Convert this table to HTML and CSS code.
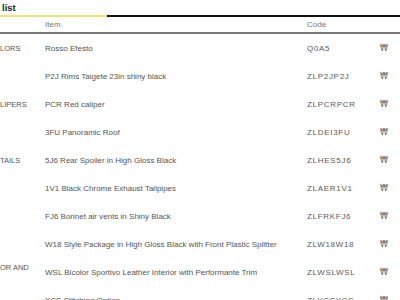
FILE: index.html
```html
<!DOCTYPE html>
<html>
<head>
<meta charset="utf-8">
<link rel="stylesheet" href="styles.css">
</head>
<body>
<div class="page">
  <div class="title">list</div>
  <div class="bar"><div class="bar-yellow"></div><div class="bar-black"></div></div>
  <div class="head">
    <div class="c-cat"></div>
    <div class="c-item">Item</div>
    <div class="c-code">Code</div>
    <div class="c-price"></div>
  </div>
  <div class="rows">
    <div class="row"><div class="c-cat">LORS</div><div class="c-item">Rosso Efesto</div><div class="c-code">Q0A5</div><div class="c-price">₩</div></div>
    <div class="row"><div class="c-cat"></div><div class="c-item">P2J Rims Taigete 23in shiny black</div><div class="c-code">ZLP2JP2J</div><div class="c-price">₩</div></div>
    <div class="row"><div class="c-cat">LIPERS</div><div class="c-item">PCR Red caliper</div><div class="c-code">ZLPCRPCR</div><div class="c-price">₩</div></div>
    <div class="row"><div class="c-cat"></div><div class="c-item">3FU Panoramic Roof</div><div class="c-code">ZLDEI3FU</div><div class="c-price">₩</div></div>
    <div class="row"><div class="c-cat">TAILS</div><div class="c-item">5J6 Rear Spoiler in High Gloss Black</div><div class="c-code">ZLHES5J6</div><div class="c-price">₩</div></div>
    <div class="row"><div class="c-cat"></div><div class="c-item">1V1 Black Chrome Exhaust Tailpipes</div><div class="c-code">ZLAER1V1</div><div class="c-price">₩</div></div>
    <div class="row"><div class="c-cat"></div><div class="c-item">FJ6 Bonnet air vents in Shiny Black</div><div class="c-code">ZLFRKFJ6</div><div class="c-price">₩</div></div>
    <div class="row"><div class="c-cat"></div><div class="c-item">W18 Style Package in High Gloss Black with Front Plastic Splitter</div><div class="c-code">ZLW18W18</div><div class="c-price">₩</div></div>
    <div class="row"><div class="c-cat raised">OR AND</div><div class="c-item">WSL Bicolor Sportivo Leather Interior with Performante Trim</div><div class="c-code">ZLWSLWSL</div><div class="c-price">₩</div></div>
    <div class="row"><div class="c-cat"></div><div class="c-item">XCS Stitching Option</div><div class="c-code">ZLYCSYCS</div><div class="c-price">₩</div></div>
  </div>
</div>
</body>
</html>
```
FILE: styles.css
```css
html, body {
  margin: 0;
  padding: 0;
  background: #ffffff;
}
body {
  font-family: "Liberation Sans", Arial, sans-serif;
  color: #555555;
  overflow: hidden;
}
.page {
  width: 400px;
}
.title {
  height: 15px;
  padding-left: 2px;
  font-size: 9.5px;
  line-height: 16px;
  font-weight: bold;
  color: #222222;
}
.bar {
  display: flex;
  height: 2px;
}
.bar-yellow {
  width: 107px;
  background: #f1e27c;
}
.bar-black {
  flex: 1;
  background: #111111;
}
.head, .row {
  display: grid;
  grid-template-columns: 45px 262px 68px 25px;
}
.head {
  height: 15px;
  align-items: end;
  font-size: 8px;
  line-height: 10px;
  color: #777777;
  border-bottom: 2px solid #777777;
}
.head > div {
  padding-bottom: 2px;
}
.row {
  height: 28px;
  align-items: center;
  font-size: 8px;
}
.c-cat {
  white-space: nowrap;
  font-size: 7.5px;
}
.raised {
  position: relative;
  top: -5px;
}
.c-item {
  white-space: nowrap;
}
.row .c-code {
  white-space: nowrap;
  font-size: 8px;
  letter-spacing: 0.7px;
  color: #5a5a5a;
}
.c-price {
  font-family: "DejaVu Sans", sans-serif;
  font-size: 8px;
  padding-left: 5px;
  color: #666666;
}
```
